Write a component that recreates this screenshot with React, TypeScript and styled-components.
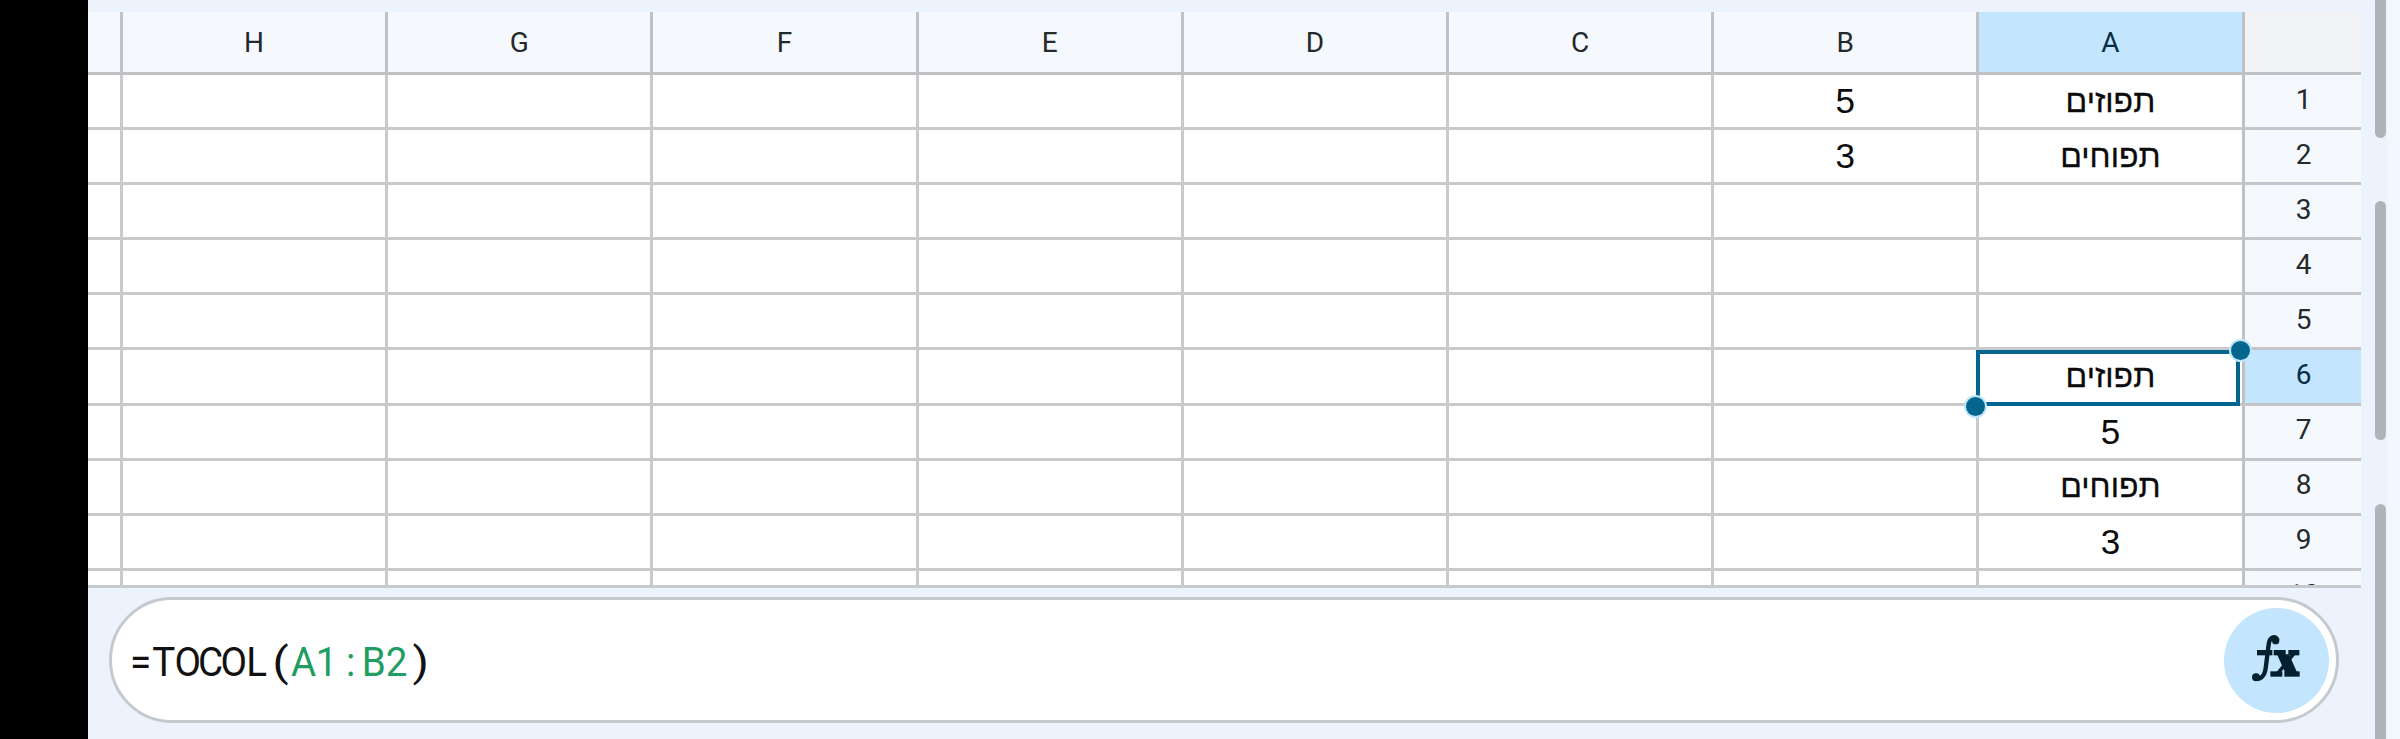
import React from "react";
import styled, { createGlobalStyle } from "styled-components";

const Global = createGlobalStyle`
  html, body { margin: 0; padding: 0; background: #000; overflow: hidden; }
  * { box-sizing: border-box; }
`;

const Screen = styled.div`
  width: 2400px; height: 739px; display: flex; background: #000; overflow: hidden;
`;
const Gutter = styled.div`
  width: 88px; flex: none; background: #000;
`;
const Surface = styled.main`
  flex: 1; display: flex; background: #ecf3fc; height: 739px; min-width: 0;
`;
const Workspace = styled.div`
  width: 2273px; flex: none; display: flex; flex-direction: column; padding-top: 12px;
`;
const Sheet = styled.div`
  height: 576px; flex: none; overflow: hidden; background: #fff;
  border-bottom: 3px solid #c6c9cd;
  display: grid; grid-template-rows: 63px; grid-auto-rows: 55.1px;
  grid-template-columns: 32px repeat(8, 265.2px) 119px;
`;
const ColHead = styled.div<{ $active?: boolean; $corner?: boolean }>`
  display: flex; align-items: center; justify-content: center;
  font: 400 28px Roboto, sans-serif;
  color: ${p => (p.$active ? "#062e46" : "#25282c")};
  background: ${p => (p.$corner ? "#f2f3f4" : p.$active ? "#c3e5fd" : "#f5f9fe")};
  border-left: 3px solid #bfc1c4;
  border-bottom: 3px solid #bfc1c4;
`;
const LeadHead = styled(ColHead)`
  border-left: 0;
`;
const RowHead = styled.div<{ $active?: boolean }>`
  display: flex; align-items: center; justify-content: center;
  font: 400 28px Roboto, sans-serif;
  color: ${p => (p.$active ? "#062e46" : "#25282c")};
  background: ${p => (p.$active ? "#c3e5fd" : "#f5f9fe")};
  border-left: 3px solid #bfc1c4;
  border-bottom: 3px solid #c3c5c8;
  padding: 0 0 4px 2px;
`;
const Cell = styled.div`
  position: relative;
  display: flex; align-items: center; justify-content: center;
  font: 400 35px "Liberation Sans", Arial, sans-serif;
  color: #0b0b0b;
  background: #fff;
  border-left: 3px solid #c8cacc;
  border-bottom: 3px solid #c8cacc;
`;
const LeadCell = styled(Cell)`
  border-left: 0;
`;
const HebrewValue = styled.span`
  font-size: 32px;
  -webkit-text-stroke: 0.3px #0b0b0b;
`;
const Selection = styled.div`
  position: absolute; z-index: 2; left: -3px; top: 0; right: 2px; bottom: -3px;
  border: 4px solid #04668f;
  pointer-events: none;
`;
const Handle = styled.span<{ $pos: "tr" | "bl" }>`
  position: absolute; width: 19px; height: 19px; border-radius: 50%;
  background: #04668f; box-shadow: 0 0 0 2px #bfe6fb;
  ${p => (p.$pos === "tr" ? "top: -13px; right: -14px;" : "bottom: -14px; left: -14px;")}
`;
const FormulaDock = styled.div`
  flex: 1; padding: 9px 22px 16px 21px;
`;
const FormulaBar = styled.div`
  height: 126px; border: 3px solid #c6c9cd; border-radius: 63px; background: #fff;
  display: flex; align-items: center; justify-content: space-between;
  padding: 0 7px 0 17px;
`;
const FormulaText = styled.div`
  display: flex; font: 400 41px Roboto, sans-serif; color: #111; line-height: 1;
  padding-top: 5px;
`;
const Glyph = styled.span<{ $ref?: boolean; $paren?: boolean }>`
  display: flex; justify-content: center; width: 23.3px;
  color: ${p => (p.$ref ? "#1f9d62" : "#111")};
  transform: scaleX(${p => (p.$paren ? 1.15 : 0.94)});
`;
const FxButton = styled.div`
  width: 105px; height: 105px; border-radius: 50%; background: #c3e5fd;
  display: flex; align-items: center; justify-content: center;
  padding-right: 5px;
`;
const ScrollTrack = styled.div`
  width: 127px; flex: none; position: relative;
  background: linear-gradient(90deg, #ecf3fc 0, #ecf3fc 25px, #f2f6fd 27px);
`;
const ScrollThumb = styled.div<{ $top: number; $h: number }>`
  position: absolute; left: 14px; top: ${p => p.$top}px; height: ${p => p.$h}px; width: 11px;
  background: #b0b4b8; border-radius: 6px;
`;

const cols = ["H", "G", "F", "E", "D", "C", "B", "A"];
const data: Record<string, string> = {
  "B1": "5", "B2": "3", "A7": "5", "A9": "3",
};
const hebrew: Record<string, string> = {
  "A1": "תפוזים", "A2": "תפוחים", "A6": "תפוזים", "A8": "תפוחים",
};
const formula: [string, boolean][] = [
  ["=", false], ["T", false], ["O", false], ["C", false], ["O", false], ["L", false], ["(", false],
  ["A", true], ["1", true], [":", true], ["B", true], ["2", true], [")", false],
];

export default function App() {
  const rows = Array.from({ length: 10 }, (_, i) => i + 1);
  return (
    <Screen>
      <Global />
      <Gutter />
      <Surface>
        <Workspace>
          <Sheet>
            <LeadHead />
            {cols.map(c => <ColHead key={c} $active={c === "A"}>{c}</ColHead>)}
            <ColHead $corner />
            {rows.map(r => (
              <React.Fragment key={r}>
                <LeadCell />
                {cols.map(c => (
                  <Cell key={c}>
                    {data[c + r]}
                    {hebrew[c + r] && <HebrewValue>{hebrew[c + r]}</HebrewValue>}
                    {c === "A" && r === 6 && (
                      <Selection>
                        <Handle $pos="tr" />
                        <Handle $pos="bl" />
                      </Selection>
                    )}
                  </Cell>
                ))}
                <RowHead $active={r === 6}>{r}</RowHead>
              </React.Fragment>
            ))}
          </Sheet>
          <FormulaDock>
            <FormulaBar>
              <FormulaText>
                {formula.map(([ch, isRef], i) => (
                  <Glyph key={i} $ref={isRef} $paren={ch === "(" || ch === ")"}>{ch}</Glyph>
                ))}
              </FormulaText>
              <FxButton>
                <svg width="70" height="70" viewBox="0 0 210 210" fill="#04202f">
                  <path d="M116 46C108 30 92 36 89 58L80 130C77 155 60 168 48 158" fill="none" stroke="#04202f" strokeWidth="13" />
                  <circle cx="110" cy="47" r="11" />
                  <circle cx="51" cy="157" r="12" />
                  <rect x="54" y="75" width="46" height="16" />
                  <rect x="104" y="75" width="36" height="16" />
                  <rect x="148" y="75" width="33" height="16" />
                  <rect x="94" y="139" width="36" height="16" />
                  <rect x="136" y="139" width="46" height="16" />
                  <path d="M114 88H150L174 142H138Z" />
                  <path d="M156 88H170L126 142H112Z" />
                </svg>
              </FxButton>
            </FormulaBar>
          </FormulaDock>
        </Workspace>
        <ScrollTrack>
          <ScrollThumb $top={-10} $h={148} />
          <ScrollThumb $top={201} $h={239} />
          <ScrollThumb $top={504} $h={245} />
        </ScrollTrack>
      </Surface>
    </Screen>
  );
}
